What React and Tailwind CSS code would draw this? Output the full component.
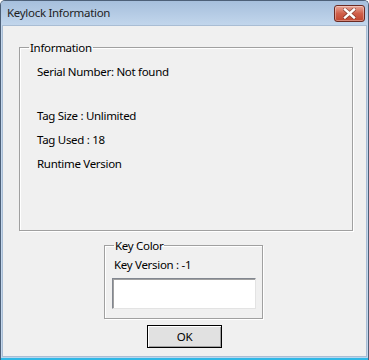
import React from 'react';

const font = { fontFamily: '"Noto Sans", "Open Sans", sans-serif' };

function CloseButton() {
  return (
    <div className="w-[31px] h-[17px] rounded-[3px] border border-[#6b2a22] bg-gradient-to-b from-[#e8a596] via-[#d0604b] to-[#c0452f] flex items-center justify-center shadow-[inset_0_0_0_1px_rgba(255,255,255,0.35)]">
      <svg width="13" height="11" viewBox="0 0 13 11">
        <path
          d="M2 1.5 L11 9.5 M11 1.5 L2 9.5"
          stroke="#5a2a22"
          strokeWidth="4"
          strokeLinecap="square"
          opacity="0.55"
        />
        <path
          d="M2 1.5 L11 9.5 M11 1.5 L2 9.5"
          stroke="#ffffff"
          strokeWidth="2.4"
          strokeLinecap="square"
        />
      </svg>
    </div>
  );
}

export default function App() {
  return (
    <div
      className="w-[369px] h-[360px] flex flex-col bg-[#c4d7ec] border border-[#4d6078] rounded-t-[5px] border-b-0 overflow-hidden text-[11.5px] tracking-[-0.3px] text-black"
      style={font}
    >
      {/* Title bar */}
      <div className="h-[24px] flex items-center justify-between pl-[6px] pr-[3px] bg-gradient-to-b from-[#a6bfdc] to-[#c2d6ec]">
        <span className="text-[11.5px] text-[#1e1e1e] leading-none">Keylock Information</span>
        <CloseButton />
      </div>

      {/* Client area */}
      <div className="flex-1 mx-[1px] bg-[#f0f0f0] border border-[#a9bdd4] flex flex-col">
        <fieldset className="mt-[14px] ml-[16px] w-[334px] h-[191px] border border-[#a0a0a0] shadow-[1px_1px_0_#ffffff,inset_1px_1px_0_#ffffff]">
          <legend className="ml-[9px] px-[1px] leading-[15px]">Information</legend>
          <div className="pl-[17px] pt-[9px] flex flex-col leading-[15px]">
            <span>Serial Number: Not found</span>
            <span className="mt-[29px]">Tag Size : Unlimited</span>
            <span className="mt-[9px]">Tag Used : 18</span>
            <span className="mt-[9px]">Runtime Version</span>
          </div>
        </fieldset>

        <fieldset className="mt-[7px] ml-[101px] w-[159px] h-[81px] border border-[#a0a0a0] shadow-[1px_1px_0_#ffffff,inset_1px_1px_0_#ffffff]">
          <legend className="ml-[9px] px-[1px] leading-[15px]">Key Color</legend>
          <div className="pl-[9px] pt-[4px] leading-[15px]">Key Version : -1</div>
          <div className="mt-[6px] ml-[7px] w-[144px] h-[31px] bg-white border border-[#828790] border-b-[#e3e3e3] border-r-[#e3e3e3] shadow-[inset_1px_1px_0_#a0a0a0]" />
        </fieldset>

        <div className="mt-[6px] flex justify-center">
          <button className="w-[75px] h-[23px] border border-black bg-[#e1e1e1] shadow-[inset_1px_1px_0_#ffffff,inset_-1px_-1px_0_#a0a0a0] text-[11.5px] leading-none">
            OK
          </button>
        </div>
      </div>

      {/* Bottom frame */}
      <div className="h-[3px] bg-[#2fb8e6] border-t border-[#b9d6ee]" />
    </div>
  );
}
